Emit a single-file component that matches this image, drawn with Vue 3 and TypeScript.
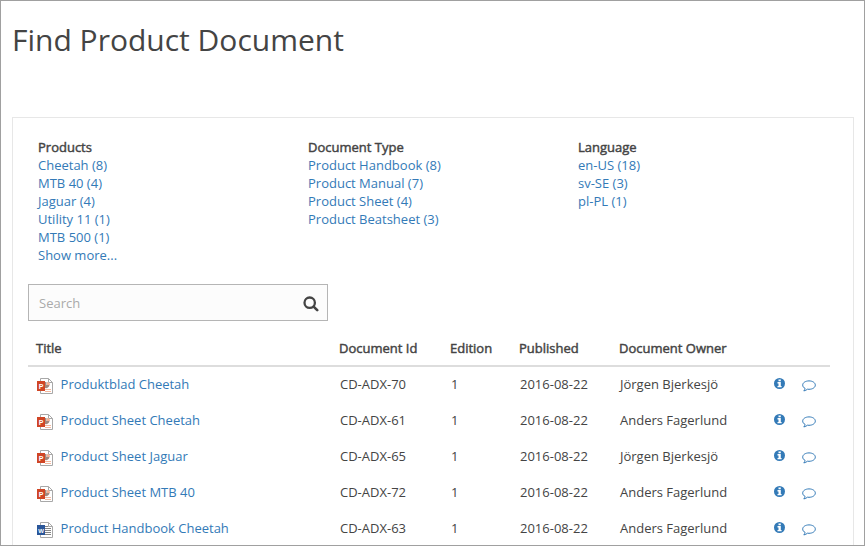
<script setup lang="ts">
interface FilterGroup {
  name: string
  items: string[]
}

interface ProductDocument {
  kind: 'P' | 'W'
  title: string
  id: string
  edition: number
  published: string
  owner: string
}

const filters: FilterGroup[] = [
  {
    name: 'Products',
    items: ['Cheetah (8)', 'MTB 40 (4)', 'Jaguar (4)', 'Utility 11 (1)', 'MTB 500 (1)', 'Show more...'],
  },
  {
    name: 'Document Type',
    items: ['Product Handbook (8)', 'Product Manual (7)', 'Product Sheet (4)', 'Product Beatsheet (3)'],
  },
  { name: 'Language', items: ['en-US (18)', 'sv-SE (3)', 'pl-PL (1)'] },
]

const columns: string[] = ['Title', 'Document Id', 'Edition', 'Published', 'Document Owner']

const documents: ProductDocument[] = [
  { kind: 'P', title: 'Produktblad Cheetah', id: 'CD-ADX-70', edition: 1, published: '2016-08-22', owner: 'Jörgen Bjerkesjö' },
  { kind: 'P', title: 'Product Sheet Cheetah', id: 'CD-ADX-61', edition: 1, published: '2016-08-22', owner: 'Anders Fagerlund' },
  { kind: 'P', title: 'Product Sheet Jaguar', id: 'CD-ADX-65', edition: 1, published: '2016-08-22', owner: 'Jörgen Bjerkesjö' },
  { kind: 'P', title: 'Product Sheet MTB 40', id: 'CD-ADX-72', edition: 1, published: '2016-08-22', owner: 'Anders Fagerlund' },
  { kind: 'W', title: 'Product Handbook Cheetah', id: 'CD-ADX-63', edition: 1, published: '2016-08-22', owner: 'Anders Fagerlund' },
]
</script>

<template>
  <main class="page">
    <h1 class="heading">Find Product Document</h1>
    <section class="panel">
      <div class="filters">
        <div v-for="group in filters" :key="group.name" class="filter">
          <h2 class="label">{{ group.name }}</h2>
          <a v-for="item in group.items" :key="item" class="link">{{ item }}</a>
        </div>
      </div>

      <div class="search">
        <input class="search-input" type="text" placeholder="Search" />
        <svg class="search-icon" width="16" height="16" viewBox="0 0 16 16">
          <circle cx="6.7" cy="6.7" r="5.2" fill="none" stroke="#444" stroke-width="2.3" />
          <path d="M10.6 10.6 14.2 14.2" stroke="#444" stroke-width="2.6" stroke-linecap="round" />
        </svg>
      </div>

      <div class="table">
        <div class="row head">
          <span v-for="column in columns" :key="column" class="label">{{ column }}</span>
        </div>
        <div v-for="doc in documents" :key="doc.id" class="row">
          <span class="title">
            <svg class="file" width="16" height="16" viewBox="0 0 16 16">
              <path d="M3.5 .5H11.5L15.5 4.5V15.5H3.5Z" fill="#fff" stroke="#a8a8a8" />
              <path d="M11.5 .5V4.5H15.5" fill="none" stroke="#a8a8a8" />
              <template v-if="doc.kind === 'P'">
                <path d="M8 4H9.500V7H12.500A3.500 3.500 0 0 1 8 10Z" fill="#a08a80" />
                <path d="M10 4A3 3 0 0 1 13 7H10Z" fill="#f3b195" />
                <path d="M8 11.500H14M8 13.500H14" stroke="#f3b99f" />
                <path d="M0 3H8V13H0Z" fill="#d04525" />
              </template>
              <template v-else>
                <path d="M8 4.500H11M8 6.500H14M8 8.500H14M8 10.500H14M6 12.500H14" stroke="#858585" />
                <path d="M0 3H8V13H0Z" fill="#2a5699" />
              </template>
              <text class="file-letter" :class="{ wide: doc.kind === 'W' }" x="4" y="10.500" text-anchor="middle">{{ doc.kind }}</text>
            </svg>
            <a class="link">{{ doc.title }}</a>
          </span>
          <span>{{ doc.id }}</span>
          <span>{{ doc.edition }}</span>
          <span>{{ doc.published }}</span>
          <span>{{ doc.owner }}</span>
          <svg class="info" width="11" height="11" viewBox="0 0 11 11">
            <circle cx="5.5" cy="5.5" r="5.5" fill="#337ab7" />
            <path d="M4.5 1.4H6.8V3.3H4.5ZM3.5 4.1H6.8V7.9H7.6V9.3H3.5V7.9H4.5V5.4H3.5Z" fill="#fff" />
          </svg>
          <svg class="comment" width="14" height="12" viewBox="0 0 14 12">
            <path
              d="M7 .9C3.4.9.7 2.7.7 5.1c0 1.4.9 2.6 2.4 3.3-.1 1-.6 1.8-1.3 2.5 1.4-.1 2.6-.7 3.6-1.7.5.1 1 .1 1.6.1 3.6 0 6.3-1.8 6.3-4.2S10.6.9 7 .9Z"
              fill="none"
              stroke="#337ab7"
            />
          </svg>
        </div>
      </div>
    </section>
  </main>
</template>

<style>
body {
  margin: 0;
  background: #fff;
}
</style>

<style scoped>
.page {
  box-sizing: border-box;
  height: 546px;
  padding: 0 10px 0 11px;
  overflow: hidden;
  border: 1px solid #a0a0a0;
  background: #fff;
  color: #444;
  font: 13px/18px 'Open Sans', sans-serif;
}
.heading {
  margin: 0;
  padding: 18px 0 56px;
  color: #444;
  font-size: 30px;
  font-weight: 400;
  line-height: 42px;
}
.panel {
  box-sizing: border-box;
  height: 460px;
  padding: 20px 23px 0 15px;
  border: 1px solid #e7e7e7;
}
.filters {
  display: grid;
  grid-template-columns: repeat(3, 270px);
  height: 146px;
  padding-left: 10px;
}
.filter {
  display: flex;
  flex-direction: column;
}
.label {
  margin: 0;
  font-size: 13px;
  font-weight: 400;
  line-height: 18px;
  -webkit-text-stroke: 0.45px #444;
}
.link {
  color: #337ab7;
}
.search {
  display: flex;
  align-items: center;
  box-sizing: border-box;
  width: 300px;
  height: 37px;
  padding: 0 8px 0 10px;
  border: 1px solid #b5b5b5;
  background: #fcfcfc;
}
.search-input {
  flex: 1;
  min-width: 0;
  padding: 0;
  border: 0;
  outline: 0;
  background: transparent;
  color: #444;
  font: inherit;
}
.search-input::placeholder {
  color: #aaa;
  opacity: 1;
}
.search-icon {
  margin-top: 2px;
}
.row {
  display: grid;
  grid-template-columns: 303px 111px 69px 100px 154px 28px 1fr;
  align-items: center;
  height: 36px;
  padding-left: 9px;
}
.head {
  height: 44px;
  padding: 0 0 0 8px;
  border-bottom: 2px solid #ddd;
}
.head .label {
  padding-top: 9px;
}
.row:not(.head) > span {
  padding-bottom: 2px;
}
.title {
  display: flex;
  gap: 7.6px;
}
.file {
  margin-top: 3px;
}
.file-letter {
  fill: #fff;
  font: bold 7px 'Liberation Sans', sans-serif;
}
.file-letter.wide {
  font-size: 6px;
}
.info {
  margin-top: -4px;
}
.comment {
  margin-top: 1px;
}
</style>
